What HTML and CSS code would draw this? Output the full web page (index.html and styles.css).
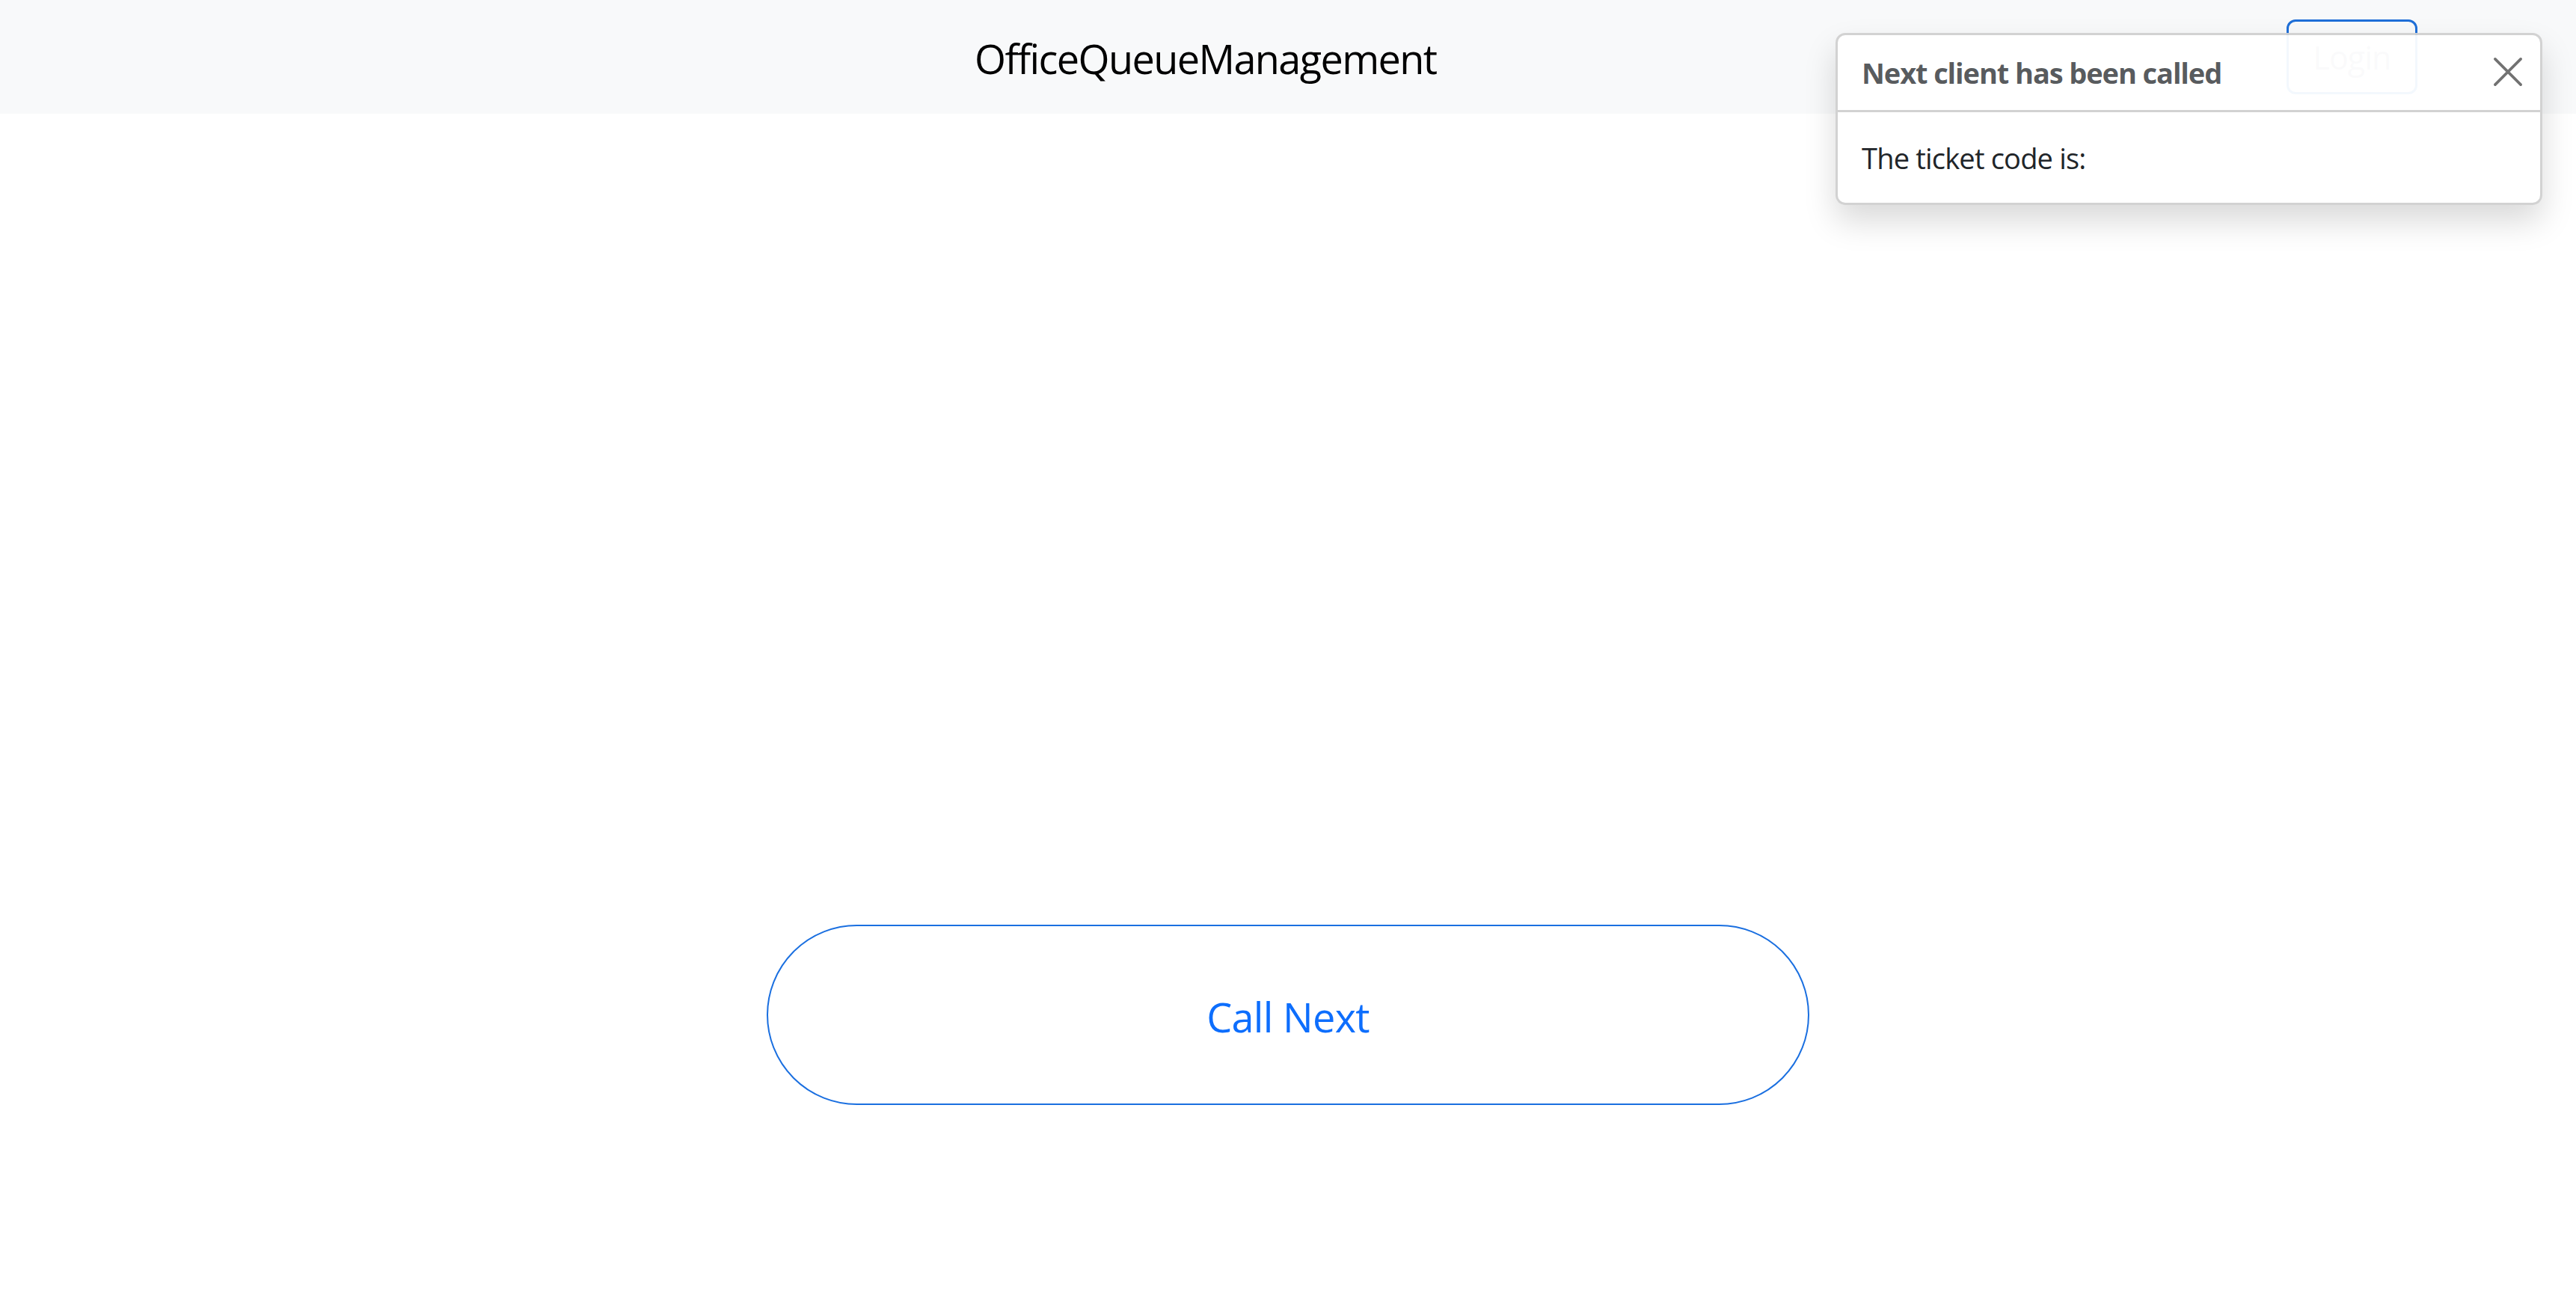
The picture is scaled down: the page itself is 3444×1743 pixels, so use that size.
FILE: index.html
```html
<!DOCTYPE html>
<html lang="en">
<head>
<meta charset="utf-8">
<title>OfficeQueueManagement</title>
<link rel="stylesheet" href="styles.css">
</head>
<body>
<nav class="navbar">
  <span class="brand">OfficeQueueManagement</span>
  <button class="login-btn">Login</button>
</nav>
<main class="main">
  <button class="call-btn">Call Next</button>
</main>
<div class="toast">
  <div class="toast-header">
    <strong class="toast-title">Next client has been called</strong>
    <button class="btn-close" aria-label="Close">
      <svg viewBox="0 0 40 40" width="40" height="40"><path d="M2 2 L38 38 M38 2 L2 38" stroke="#000" stroke-width="3.8" stroke-linecap="round" fill="none"/></svg>
    </button>
  </div>
  <div class="toast-body">The ticket code is:</div>
</div>
</body>
</html>
```

FILE: styles.css
```css
html, body {
  margin: 0;
  padding: 0;
  background: #fff;
  font-family: "Open Sans", "Noto Sans", "DejaVu Sans", sans-serif;
  color: #212529;
}

.navbar {
  height: 152px;
  background: #f8f9fa;
  display: flex;
  align-items: center;
  justify-content: space-between;
  padding: 0 212px 0 1303px;
  box-sizing: border-box;
}

.brand {
  font-size: 54px;
  color: #000;
  letter-spacing: -1.6px;
  line-height: 1;
  padding-top: 4px;
}

.login-btn {
  width: 175px;
  height: 100px;
  border: 3px solid #1f6fd8;
  border-radius: 12px;
  background: transparent;
  color: #9aa3ad;
  font-family: inherit;
  font-size: 43px;
  letter-spacing: -1px;
}

.main {
  display: flex;
  justify-content: center;
  padding-top: 1084px;
}

.call-btn {
  width: 1394px;
  height: 241px;
  border: 2.5px solid #1a6fe0;
  border-radius: 121px;
  background: #fff;
  color: #0d6efd;
  font-family: inherit;
  font-size: 54px;
  letter-spacing: -0.7px;
  padding-top: 6px;
}

.toast {
  position: absolute;
  top: 44px;
  right: 45px;
  width: 945px;
  box-sizing: border-box;
  background: rgba(255, 255, 255, 0.95);
  border: 3px solid rgba(0, 0, 0, 0.175);
  border-radius: 13px;
  box-shadow: 0 22px 43px rgba(0, 0, 0, 0.15);
  overflow: hidden;
}

.toast-header {
  height: 103px;
  box-sizing: border-box;
  display: flex;
  align-items: center;
  justify-content: space-between;
  padding: 0 22px 0 32px;
  border-bottom: 3px solid rgba(0, 0, 0, 0.175);
  color: rgba(33, 37, 41, 0.75);
}

.toast-title {
  font-size: 38px;
  font-weight: 700;
  letter-spacing: -1.1px;
}

.btn-close {
  border: 0;
  background: transparent;
  padding: 0;
  width: 40px;
  height: 40px;
  opacity: 0.55;
  display: flex;
}

.btn-close svg {
  width: 38px;
  height: 38px;
}

.toast-body {
  height: 121px;
  box-sizing: border-box;
  display: flex;
  align-items: center;
  padding: 0 32px;
  font-size: 38px;
  letter-spacing: -0.8px;
  color: #212529;
}
```
